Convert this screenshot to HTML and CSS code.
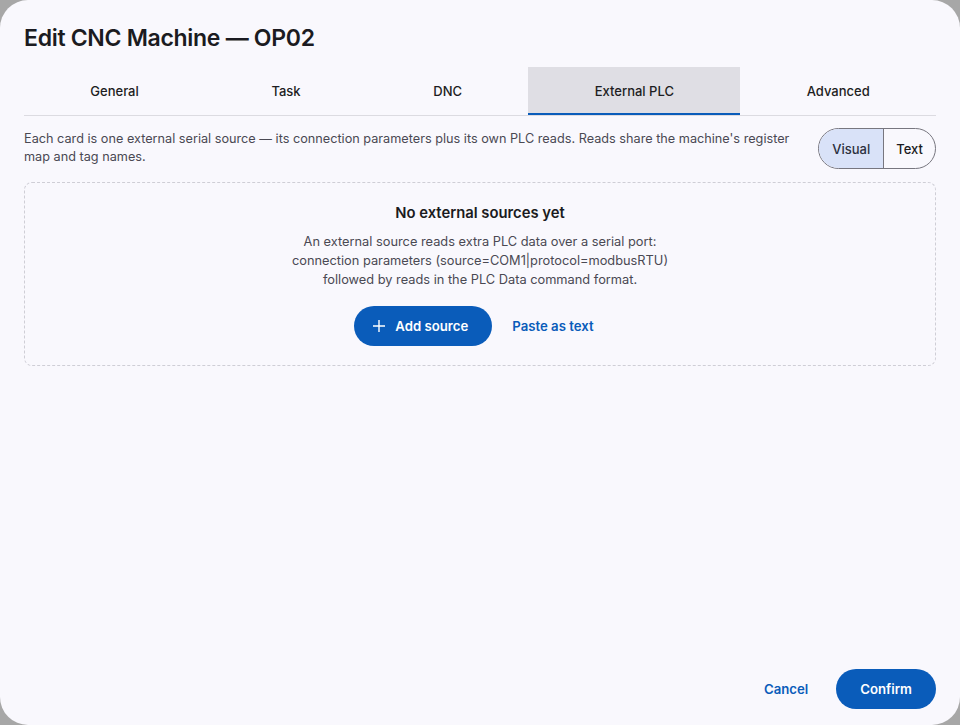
FILE: index.html
```html
<!DOCTYPE html>
<html lang="en">
<head>
    <meta charset="UTF-8">
    <meta name="viewport" content="width=device-width, initial-scale=1.0">
    <title>Edit CNC Machine — OP02</title>
    <link rel="stylesheet" href="styles.css">
</head>
<body>
    <div class="dialog">
        <h1 class="dialog-title">Edit CNC Machine — OP02</h1>

        <div class="tabs">
            <div class="tab">General</div>
            <div class="tab">Task</div>
            <div class="tab">DNC</div>
            <div class="tab active">External PLC</div>
            <div class="tab">Advanced</div>
        </div>

        <div class="intro">
            <p class="intro-text">Each card is one external serial source — its connection parameters plus its own PLC reads. Reads share the machine's register map and tag names.</p>
            <div class="toggle">
                <button class="toggle-opt selected">Visual</button>
                <button class="toggle-opt">Text</button>
            </div>
        </div>

        <div class="empty">
            <div class="empty-title">No external sources yet</div>
            <p class="empty-text">An external source reads extra PLC data over a serial port:<br>connection parameters (source=COM1|protocol=modbusRTU)<br>followed by reads in the PLC Data command format.</p>
            <div class="empty-actions">
                <button class="btn btn-filled">
                    <svg width="14" height="14" viewBox="0 0 14 14"><path d="M7 1v12M1 7h12" stroke="#fff" stroke-width="1.4" fill="none"/></svg>
                    Add source
                </button>
                <button class="btn btn-text">Paste as text</button>
            </div>
        </div>

        <div class="footer">
            <button class="btn btn-text">Cancel</button>
            <button class="btn btn-filled btn-confirm">Confirm</button>
        </div>
    </div>
</body>
</html>
```

FILE: styles.css
```css
body {
    margin: 0;
    padding: 0;
    background: #a7a7a7;
    font-family: Inter, "Noto Sans", sans-serif;
    color: #1b1b21;
    overflow: hidden;
}

.dialog {
    width: 960px;
    height: 725px;
    box-sizing: border-box;
    padding: 24px 24px 16px;
    background: #f9f8fd;
    border-radius: 28px;
    display: flex;
    flex-direction: column;
}

.dialog-title {
    margin: 0;
    font-size: 23px;
    line-height: 28px;
    font-weight: 600;
    letter-spacing: -0.3px;
}

.tabs {
    margin-top: 15px;
    display: flex;
    border-bottom: 1px solid #dcdbe1;
}
.tab {
    flex: 1 1 auto;
    height: 48px;
    box-sizing: border-box;
    display: flex;
    align-items: center;
    justify-content: center;
    font-size: 13px;
    font-weight: 500;
    color: #1d1d22;
    border-bottom: 2px solid transparent;
    padding-top: 2px;
}
.tab.active {
    background: #dfdee4;
    border-bottom-color: #0a5cba;
}

.intro {
    margin-top: 12px;
    display: flex;
    align-items: flex-start;
    justify-content: space-between;
    gap: 24px;
}
.intro-text {
    margin: 2px 0 0;
    max-width: 780px;
    font-size: 12.7px;
    line-height: 18px;
    color: #4a4953;
}

.toggle {
    display: flex;
    height: 41px;
    border: 1px solid #77767f;
    border-radius: 21px;
    overflow: hidden;
    flex-shrink: 0;
    box-sizing: border-box;
}
.toggle-opt {
    border: none;
    background: transparent;
    font-family: inherit;
    font-size: 13px;
    font-weight: 500;
    color: #1b1b21;
    padding: 0 12px;
}
.toggle-opt.selected {
    background: #d9e2f8;
    color: #2c3140;
    padding: 0 13px;
    border-right: 1px solid #77767f;
}

.empty {
    margin-top: 13px;
    border: 1px dashed #cfced6;
    border-radius: 8px;
    padding: 20px 24px 19px;
    text-align: center;
}
.empty-title {
    font-size: 14.8px;
    line-height: 20px;
    font-weight: 600;
}
.empty-text {
    margin: 9px 0 0;
    font-size: 12.8px;
    line-height: 19px;
    color: #4a4953;
}
.empty-actions {
    margin-top: 17px;
    display: flex;
    justify-content: center;
    gap: 8px;
}

.btn {
    height: 40px;
    border: none;
    border-radius: 20px;
    font-family: inherit;
    font-size: 13.2px;
    font-weight: 600;
    display: flex;
    align-items: center;
    cursor: pointer;
}
.btn-filled {
    background: #0a5cba;
    color: #fff;
    padding: 0 24px 0 18px;
    gap: 9px;
}
.btn-text {
    background: transparent;
    color: #0a5cba;
    padding: 0 12px;
}

.footer {
    margin-top: auto;
    display: flex;
    justify-content: flex-end;
    gap: 16px;
}
.btn-confirm {
    padding: 0 24px;
}
```
